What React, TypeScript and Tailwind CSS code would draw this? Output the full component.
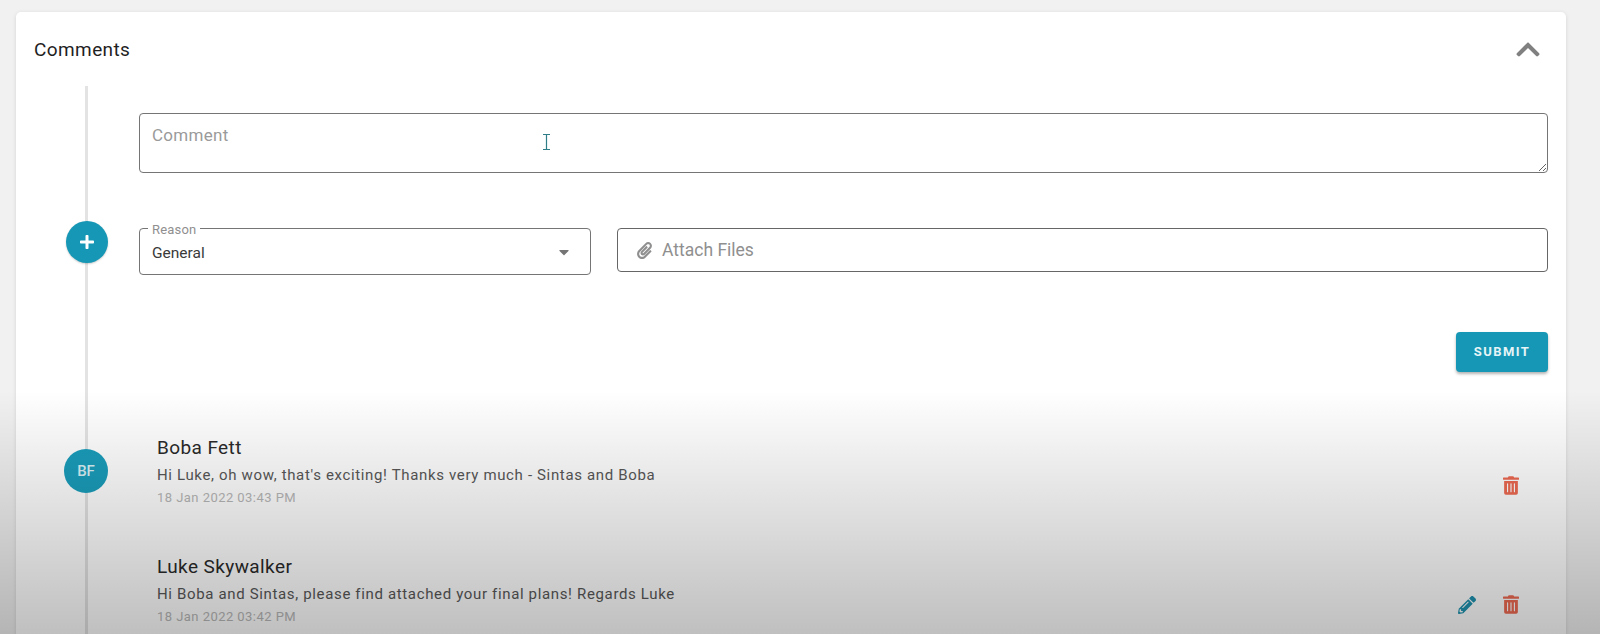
import { FaChevronUp, FaPlus, FaPaperclip, FaCaretDown, FaTrashAlt, FaPencilAlt } from "react-icons/fa";

type CommentItem = {
  initials?: string;
  name: string;
  message: string;
  date: string;
  editable?: boolean;
};

const comments: CommentItem[] = [
  {
    initials: "BF",
    name: "Boba Fett",
    message: "Hi Luke, oh wow, that's exciting! Thanks very much - Sintas and Boba",
    date: "18 Jan 2022 03:43 PM",
  },
  {
    name: "Luke Skywalker",
    message: "Hi Boba and Sintas, please find attached your final plans! Regards Luke",
    date: "18 Jan 2022 03:42 PM",
    editable: true,
  },
];

function CommentRow({ item }: { item: CommentItem }) {
  return (
    <div className="flex h-[119px] items-start pl-[48px] pr-[47px]">
      <div className="mt-[12px] w-[44px] shrink-0">
        {item.initials && (
          <div className="relative flex h-[44px] w-[44px] items-center justify-center rounded-full bg-[#1a9dbb] text-[15px] font-medium text-[#d9f0f5]">
            {item.initials}
          </div>
        )}
      </div>
      <div className="ml-[49px] flex-1">
        <p className="text-[19px] leading-[22px] tracking-[0.4px] text-[#2a2a2a]">{item.name}</p>
        <p className="mt-[6px] text-[15px] leading-[20px] tracking-[0.65px] text-[#585858]">{item.message}</p>
        <p className="mt-[5px] text-[13px] leading-[16px] tracking-[0.45px] text-[#b8b8b8]">{item.date}</p>
      </div>
      <div className="mt-[39px] flex items-center gap-[27px]">
        {item.editable && <FaPencilAlt className="h-[18px] w-[18px] text-[#1f93b0]" />}
        <FaTrashAlt className="h-[19px] w-[16px] text-[#ee6a52]" />
      </div>
    </div>
  );
}

export default function App() {
  return (
    <div className="relative h-[634px] overflow-hidden bg-[#f1f1f1] pl-[16px] pr-[34px] pt-[12px] font-['Roboto',sans-serif]">
      <div className="h-[680px] rounded-[5px] bg-white shadow-[0_1px_4px_rgba(0,0,0,0.12)]">
        <div className="flex h-[74px] items-center justify-between pl-[18px] pr-[26px]">
          <h2 className="pt-[2px] text-[19px] tracking-[0.4px] text-[#1f1f1f]">Comments</h2>
          <FaChevronUp className="h-[27px] w-[24px] text-[#808080]" />
        </div>

        <div className="relative">
          {/* timeline rail */}
          <div className="absolute bottom-0 left-[69px] top-0 w-[3px] bg-[#e3e3e3]" />

          <div className="pl-[123px] pr-[18px] pt-[27px]">
            <textarea
              placeholder="Comment"
              className="block h-[60px] w-full resize-y rounded-[4px] border border-[#757575] px-[12px] py-[9px] text-[17px] tracking-[0.3px] text-[#333] outline-none placeholder:text-[#9a9a9a]"
            />
          </div>

          <div className="relative mt-[55px] flex items-start pl-[50px] pr-[18px]">
            <div className="-mt-[7px] mr-[31px] flex h-[42px] w-[42px] shrink-0 items-center justify-center rounded-full bg-[#1597b5] text-white shadow-[0_1px_2px_rgba(0,0,0,0.2)]">
              <FaPlus className="h-[16px] w-[16px]" />
            </div>
            <div className="relative flex h-[47px] w-[452px] shrink-0 items-center justify-between rounded-[4px] border border-[#757575] pl-[12px] pr-[19px]">
              <span className="absolute -top-[6px] left-[8px] bg-white px-[4px] text-[13px] leading-[14px] tracking-[0.2px] text-[#8f8f8f]">
                Reason
              </span>
              <span className="mt-[5px] text-[15.5px] text-[#3a3a3a]">General</span>
              <FaCaretDown className="h-[16px] w-[14px] text-[#757575]" />
            </div>
            <div className="ml-[26px] flex h-[44px] flex-1 items-center rounded-[4px] border border-[#666] pl-[18px]">
              <FaPaperclip className="h-[17px] w-[17px] text-[#8f8f8f]" />
              <span className="ml-[9px] text-[17.5px] text-[#8f8f8f]">Attach Files</span>
            </div>
          </div>

          <div className="mt-[57px] flex justify-end pr-[18px]">
            <button className="h-[40px] w-[92px] rounded-[4px] bg-[#1597b5] text-[13px] font-bold tracking-[1.4px] text-[#e6f4f7] shadow-[0_2px_3px_rgba(0,0,0,0.3)]">
              SUBMIT
            </button>
          </div>

          <div className="relative mt-[65px]">
            {comments.map((item) => (
              <CommentRow key={item.name} item={item} />
            ))}
          </div>
        </div>
      </div>

      {/* video player shade across the bottom of the capture */}
      <div className="pointer-events-none absolute inset-x-0 bottom-0 h-[244px] bg-gradient-to-b from-transparent to-black/25" />

      {/* mouse cursor */}
      <svg className="pointer-events-none absolute left-[542px] top-[134px]" width="9" height="16" viewBox="0 0 9 16" fill="none" stroke="#2f7d86" strokeWidth="1.2">
        <path d="M1 .5h7M4.5.5v15M1 15.5h7" />
      </svg>
    </div>
  );
}
